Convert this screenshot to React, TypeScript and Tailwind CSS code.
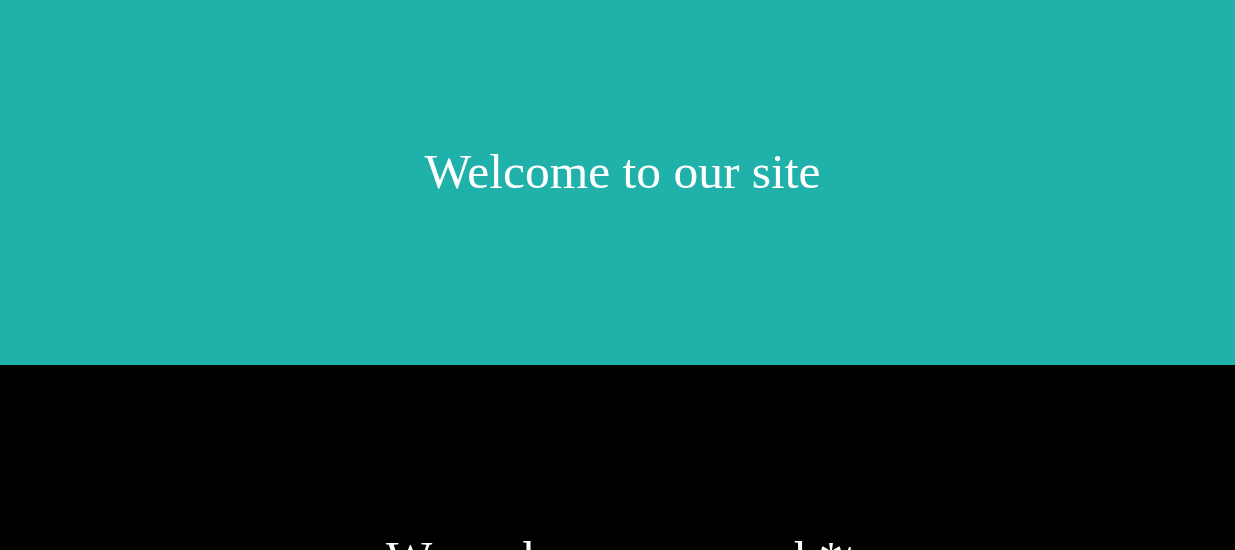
export default function App() {
  return (
    <div className="w-full h-[550px] overflow-hidden" style={{ fontFamily: '"Liberation Serif", "Times New Roman", serif' }}>
      <section className="h-[365px] bg-[#20b2aa] pt-[145px] pl-[10px]">
        <h1 className="text-center text-white text-[49.5px] leading-[53px] font-normal">Welcome to our site</h1>
      </section>
      <section className="bg-black h-[185px] pt-[167px] pl-[8px]">
        <h2 className="text-center text-white text-[49px] leading-[53px] font-normal whitespace-nowrap">We make awesome sh*t</h2>
      </section>
    </div>
  );
}
